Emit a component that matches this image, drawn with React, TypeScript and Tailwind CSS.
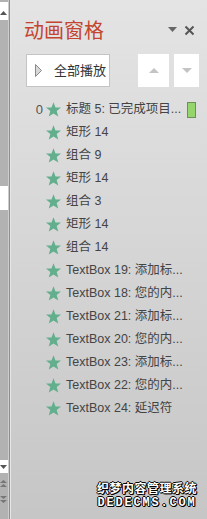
import React from 'react';

const rows = [
  { num: '0', label: '标题 5: 已完成项目...', marker: true },
  { label: '矩形 14' },
  { label: '组合 9' },
  { label: '矩形 14' },
  { label: '组合 3' },
  { label: '矩形 14' },
  { label: '组合 14' },
  { label: 'TextBox 19: 添加标...' },
  { label: 'TextBox 18: 您的内...' },
  { label: 'TextBox 21: 添加标...' },
  { label: 'TextBox 20: 您的内...' },
  { label: 'TextBox 23: 添加标...' },
  { label: 'TextBox 22: 您的内...' },
  { label: 'TextBox 24: 延迟符' },
];

function Star() {
  return (
    <svg width="15" height="15" viewBox="0 0 24 24" className="shrink-0">
      <polygon points="12,0.5 15.2,8.6 24,8.9 17.1,14.4 19.6,23.2 12,18.2 4.4,23.2 6.9,14.4 0,8.9 8.8,8.6" fill="#62ae8d" />
    </svg>
  );
}

const font = "font-['Liberation_Sans','Noto_Sans_CJK_SC',sans-serif]";

export default function App() {
  return (
    <div className={`relative flex h-[519px] w-[207px] overflow-hidden ${font}`}>
      {/* scrollbar of the slide area */}
      <div className="flex w-[8px] flex-col bg-[#b2b2b2]">
        <div className="mt-[2px] flex h-[18px] items-start justify-start bg-white pt-[9px]">
          <svg width="7" height="4" viewBox="0 0 7 4"><polygon points="0,4 3.5,0 7,4" fill="#555" /></svg>
        </div>
        <div className="mt-[166px] h-[24px] bg-white" />
        <div className="mt-[250px] flex h-[13px] items-center bg-white">
          <svg width="7" height="4" viewBox="0 0 7 4"><polygon points="0,0 3.5,4 7,0" fill="#555" /></svg>
        </div>
        <div className="mt-[7px] flex flex-col items-start">
          <svg width="7" height="7" viewBox="0 0 7 7"><polygon points="0,3 3.5,0 7,3" fill="#777" /><polygon points="0,7 3.5,4 7,7" fill="#777" /></svg>
        </div>
        <div className="mt-[9px] flex flex-col items-start">
          <svg width="7" height="7" viewBox="0 0 7 7"><polygon points="0,0 3.5,3 7,0" fill="#777" /><polygon points="0,4 3.5,7 7,4" fill="#777" /></svg>
        </div>
      </div>
      <div className="w-px bg-[#cdcdcd]" />
      <div className="w-px bg-[#8e8e8e]" />
      <div className="w-px bg-[#e6e6e6]" />

      {/* animation pane */}
      <div className="flex flex-1 flex-col bg-gradient-to-b from-[#e4e4e4] to-[#c6c6c6]">
        <div className="flex items-center pl-[13px] pr-[12px] pt-[18px]">
          <span className="text-[20px] leading-[26px] text-[#c4452f]">动画窗格</span>
          <svg width="9" height="5" viewBox="0 0 9 5" className="ml-auto mt-[-3px]"><polygon points="0,0 4.5,5 9,0" fill="#666" /></svg>
          <svg width="11" height="11" viewBox="0 0 11 11" className="ml-[7px] mt-[-1px]">
            <path d="M1.5 1.5 L9.5 9.5 M9.5 1.5 L1.5 9.5" stroke="#555" strokeWidth="2" />
          </svg>
        </div>

        <div className="mt-[10px] flex items-center pl-[15px]">
          <button className="flex h-[33px] w-[84px] items-center border border-[#c4c4c4] bg-white pl-[8px]">
            <svg width="7" height="13" viewBox="0 0 7 13"><polygon points="0.5,0.5 6.5,6.5 0.5,12.5" fill="#d8d8d8" stroke="#8a8a8a" /></svg>
            <span className="ml-[12px] text-[13px] leading-none text-[#333]">全部播放</span>
          </button>
          <button className="ml-[28px] flex h-[33px] w-[31px] items-center justify-center bg-white">
            <svg width="10" height="5" viewBox="0 0 10 5"><polygon points="0,5 5,0 10,5" fill="#c4c4c4" /></svg>
          </button>
          <button className="ml-[5px] flex h-[33px] w-[25px] items-center justify-center bg-white">
            <svg width="10" height="5" viewBox="0 0 10 5"><polygon points="0,0 5,5 10,0" fill="#c4c4c4" /></svg>
          </button>
        </div>

        <div className="mt-[11px] flex flex-col">
          {rows.map((r, i) => (
            <div key={i} className="flex h-[23px] items-center pl-[20px] pr-[11px]">
              <span className="w-[12px] text-right text-[13px] leading-none text-[#555]">{r.num ?? ''}</span>
              <span className="ml-[3px]"><Star /></span>
              <span className="ml-[5px] whitespace-nowrap text-[12.5px] leading-none text-[#444]">{r.label}</span>
              {r.marker && <span className="ml-auto h-[16px] w-[9px] border border-[#6e8f55] bg-[#96d46c]" />}
            </div>
          ))}
        </div>
      </div>

      {/* watermark */}
      <div className="absolute bottom-[10px] right-[10px] flex flex-col items-center text-white">
        <span className="text-[12px] font-bold leading-[15px] tracking-[0.5px] [text-shadow:1px_0_0_#000,-1px_0_0_#000,0_1px_0_#000,0_-1px_0_#000,1px_1px_0_#000]">织梦内容管理系统</span>
        <span className="font-['Liberation_Mono',monospace] text-[12px] font-bold leading-[12px] tracking-[1.8px] [text-shadow:1px_0_0_#000,-1px_0_0_#000,0_1px_0_#000,0_-1px_0_#000,1px_1px_0_#000]">DEDECMS.COM</span>
      </div>
    </div>
  );
}
